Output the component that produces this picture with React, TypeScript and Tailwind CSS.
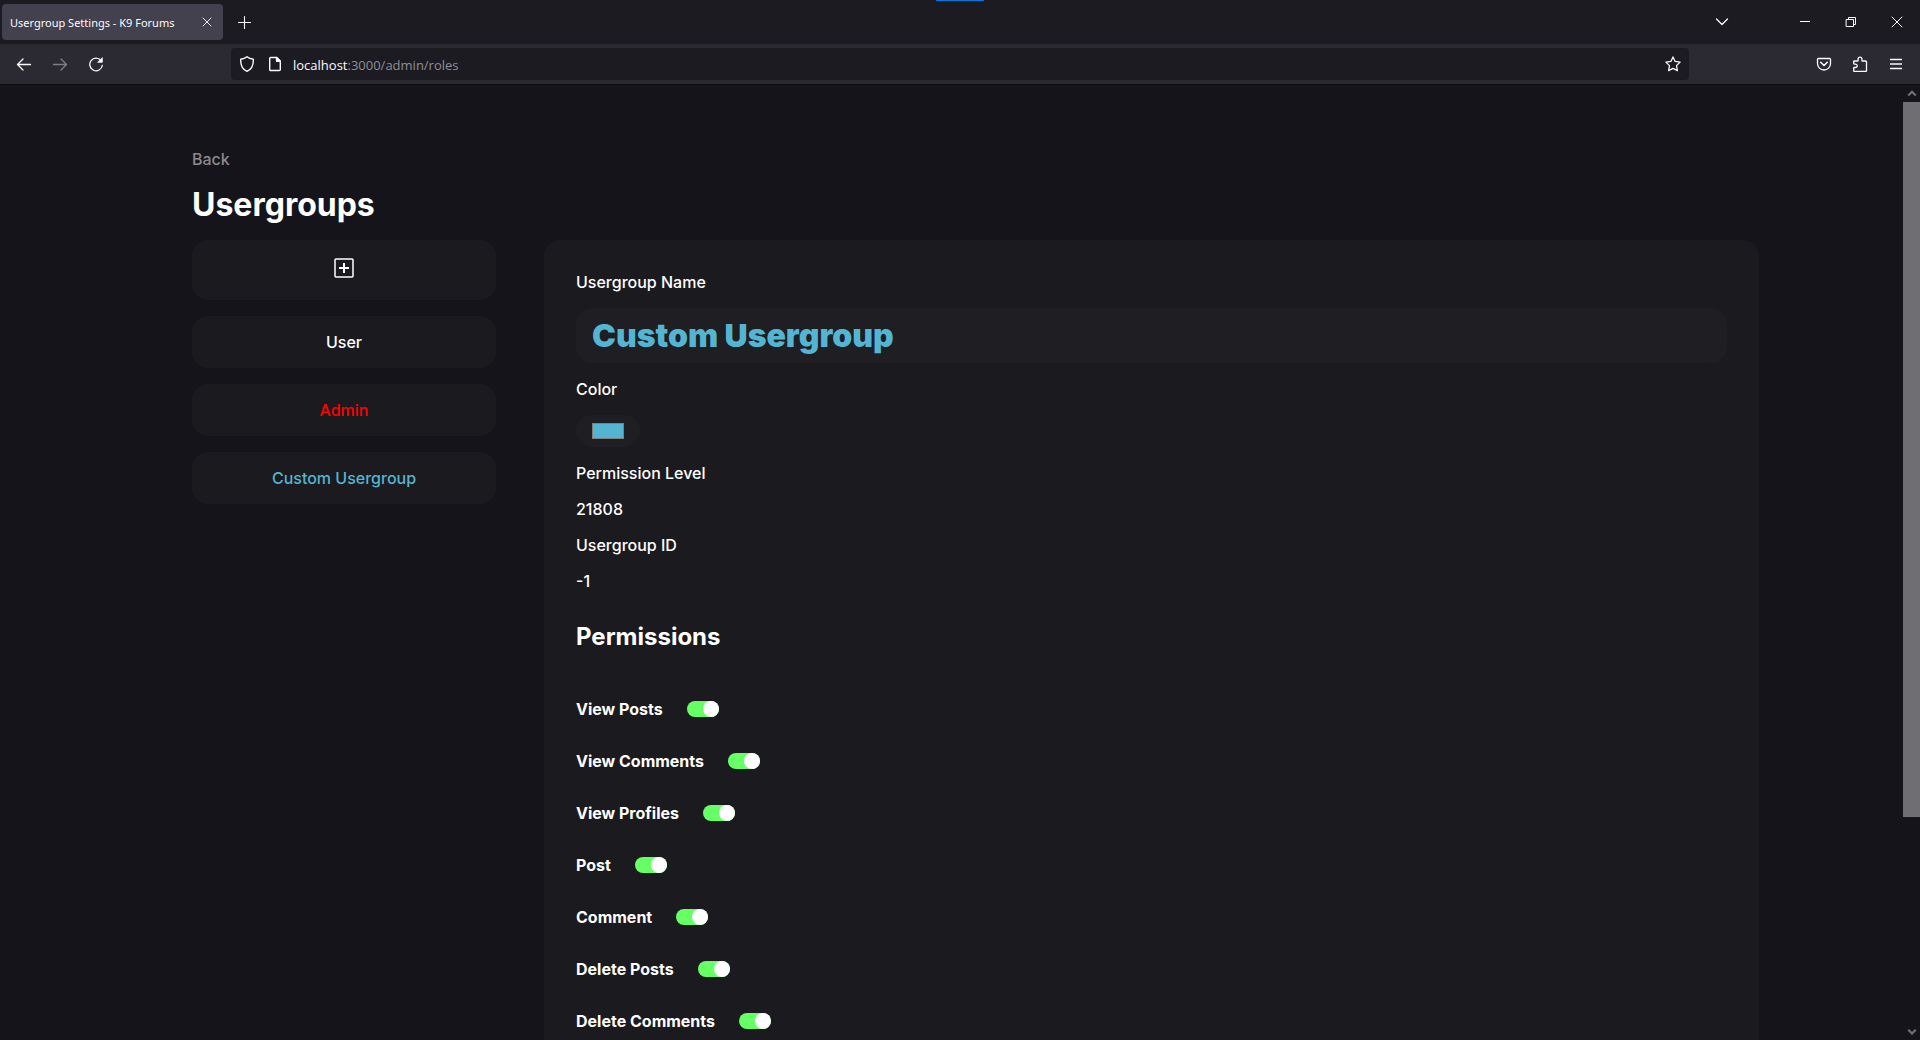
import { useState } from "react";
import type { ReactNode } from "react";

function Icon({ children, className = "size-4" }: { children: ReactNode; className?: string }) {
  return (
    <svg
      viewBox="0 0 16 16"
      fill="none"
      stroke="currentColor"
      strokeWidth="1.3"
      strokeLinecap="round"
      strokeLinejoin="round"
      aria-hidden="true"
      className={className}
    >
      {children}
    </svg>
  );
}

function BarButton({
  label,
  children,
  className = "",
  disabled = false,
}: {
  label: string;
  children: ReactNode;
  className?: string;
  disabled?: boolean;
}) {
  return (
    <button
      type="button"
      aria-label={label}
      disabled={disabled}
      className={`flex size-8 shrink-0 items-center justify-center rounded disabled:opacity-40 ${className}`}
    >
      {children}
    </button>
  );
}

function TabStrip() {
  return (
    <div className="relative flex h-11 shrink-0 items-center bg-[#1c1b22] pl-0.5">
      <div className="absolute top-0 left-1/2 h-px w-12 -translate-x-1/2 bg-[#0078d7]" />
      <div className="flex h-9 w-[221px] items-center justify-between rounded bg-[#42414d] pr-1 pl-2">
        <span className="pt-0.5 font-['Noto_Sans',sans-serif] text-[11px] whitespace-nowrap">
          Usergroup Settings - K9 Forums
        </span>
        <button type="button" aria-label="Close tab" className="flex size-6 items-center justify-center">
          <Icon>
            <path d="M4 4l8 8M12 4l-8 8" strokeWidth="0.900" />
          </Icon>
        </button>
      </div>
      <BarButton label="New tab" className="ml-1.5">
        <Icon>
          <path d="M7.500 2.500v12M1.500 8.500h12" strokeWidth="1.100" />
        </Icon>
      </BarButton>
      <div className="ml-auto flex items-center">
        <BarButton label="List all tabs" className="mr-11">
          <Icon>
            <path d="M2.500 5l5.500 5.500L13.500 5" />
          </Icon>
        </BarButton>
        <BarButton label="Minimize" className="w-[46px]">
          <Icon>
            <path d="M3 7.500h10" strokeWidth="1" strokeLinecap="butt" />
          </Icon>
        </BarButton>
        <BarButton label="Restore" className="w-[46px]">
          <Icon>
            <path d="M3.500 5.500h7v7h-7zM5.500 5.500v-2h7v7h-2" strokeWidth="1" strokeLinejoin="miter" />
          </Icon>
        </BarButton>
        <BarButton label="Close" className="w-[46px]">
          <Icon>
            <path d="M3 3l10 10M13 3L3 13" strokeWidth="1" />
          </Icon>
        </BarButton>
      </div>
    </div>
  );
}

function Toolbar() {
  return (
    <div className="flex h-[41px] shrink-0 items-center border-b border-[#0c0c0d] bg-[#2b2a33]">
      <div className="flex w-[231px] shrink-0 gap-1 pl-2">
        <BarButton label="Back">
          <Icon>
            <path d="M1.500 8.500h13M7 3L1.500 8.500 7 14" />
          </Icon>
        </BarButton>
        <BarButton label="Forward" disabled>
          <Icon>
            <path d="M1.500 8.500h13M9 3l5.500 5.500L9 14" />
          </Icon>
        </BarButton>
        <BarButton label="Reload">
          <Icon>
            <path d="M13 4.500A6.300 6.300 0 1 0 14.300 9.500" />
            <path d="M14.300 2v4.300H10z" fill="currentColor" strokeWidth="0.800" />
          </Icon>
        </BarButton>
      </div>
      <div className="flex h-8 min-w-0 flex-1 items-center rounded bg-[#1c1b22] px-2">
        <Icon className="size-4 shrink-0">
          <path
            d="M8 0.700c1.700 1.400 3.700 2.200 6.300 2.600 0.300 5.600-1.600 10-6.300 12-4.700-2-6.600-6.400-6.300-12C4.300 2.900 6.300 2.100 8 0.700z"
            strokeWidth="1.400"
          />
        </Icon>
        <Icon className="ml-3 size-4 shrink-0">
          <path d="M3.700 1.500h6l3.600 3.600v8.400a1 1 0 0 1-1 1H3.700a1 1 0 0 1-1-1v-11a1 1 0 0 1 1-1z" strokeWidth="1.400" />
          <path d="M9.500 1.500v3.800h3.800z" fill="currentColor" />
        </Icon>
        <div className="ml-2.5 flex min-w-0 flex-1 items-center pt-0.5 text-[13px] leading-5">
          <label htmlFor="address">localhost</label>
          <input
            id="address"
            defaultValue=":3000/admin/roles"
            className="min-w-0 flex-1 bg-transparent text-[#8f8f97] outline-none"
          />
        </div>
        <button type="button" aria-label="Bookmark this page">
          <Icon>
            <path d="M8 0.900l2.100 4.500 5 0.700-3.600 3.500 0.900 5L8 12.300l-4.400 2.300 0.900-5L0.900 6.100l5-0.700z" />
          </Icon>
        </button>
      </div>
      <div className="flex w-[231px] shrink-0 justify-end gap-1 pr-2">
        <BarButton label="Save to Pocket">
          <Icon>
            <path d="M2.500 2.500h11a1 1 0 0 1 1 1V7.500a6.500 6.500 0 0 1-13 0V3.500a1 1 0 0 1 1-1z" />
            <path d="M4.700 6.300L8 9.500l3.300-3.200" strokeWidth="1.600" />
          </Icon>
        </BarButton>
        <BarButton label="Extensions">
          <Icon>
            <path d="M2 5h3.500a0.600 0.600 0 0 0 0.600-0.600V3a1.900 1.900 0 0 1 3.800 0v1.400a0.600 0.600 0 0 0 0.600 0.600H13.500a1 1 0 0 1 1 1v8.500a1 1 0 0 1-1 1H2.500a0.800 0.800 0 0 1-0.800-0.800V12a0.500 0.500 0 0 1 0.500-0.500H3.500a1.700 1.700 0 0 0 0-3.400H2.200a0.500 0.500 0 0 1-0.500-0.500V5.300z" />
          </Icon>
        </BarButton>
        <BarButton label="Open application menu">
          <Icon>
            <path d="M2.500 3.500h11M2.500 8h11M2.500 12.500h11" />
          </Icon>
        </BarButton>
      </div>
    </div>
  );
}

const groups = [
  { name: "User", color: "text-white" },
  { name: "Admin", color: "text-[#ff0000]" },
  { name: "Custom Usergroup", color: "text-[#54b5d2]" },
];

const permissions = [
  "View Posts",
  "View Comments",
  "View Profiles",
  "Post",
  "Comment",
  "Delete Posts",
  "Delete Comments",
];

function Toggle({ label }: { label: string }) {
  const [on, setOn] = useState(true);
  return (
    <label className="flex items-center gap-6 self-start leading-5 font-bold">
      {label}
      <input
        type="checkbox"
        checked={on}
        onChange={() => setOn(!on)}
        className="h-4 w-8 appearance-none rounded-full bg-[#3a3a40] before:block before:size-4 before:rounded-full before:bg-white checked:bg-[#66ff66] checked:before:ml-4"
      />
    </label>
  );
}

function Scrollbar() {
  return (
    <div aria-hidden="true" className="flex w-[17px] shrink-0 flex-col text-[#6f6e73]">
      <div className="flex h-[17px] items-center justify-center">
        <Icon className="size-3">
          <path d="M3 10l5-5 5 5" strokeWidth="3" strokeLinecap="butt" strokeLinejoin="miter" />
        </Icon>
      </div>
      <div className="flex-1">
        <div className="h-[77.6%] bg-[#6f6e73]" />
      </div>
      <div className="flex h-[17px] items-center justify-center">
        <Icon className="size-3">
          <path d="M3 5l5 5 5-5" strokeWidth="3" strokeLinecap="butt" strokeLinejoin="miter" />
        </Icon>
      </div>
    </div>
  );
}

export default function App() {
  return (
    <div className="flex h-screen flex-col overflow-hidden bg-[#15141a] text-white">
      <header className="font-['Open_Sans',sans-serif] text-[#fbfbfe]">
        <TabStrip />
        <Toolbar />
      </header>
      <div className="flex min-h-0 flex-1">
        <main className="min-w-0 flex-1 overflow-hidden pt-16 pr-36 pl-48 font-['Inter',sans-serif] text-base leading-5 font-medium">
          <a href="#admin" className="inline-block text-[#8a898c]">
            Back
          </a>
          <h1 className="mt-4 text-[32px] leading-10 font-bold">Usergroups</h1>
          <div className="mt-[15px] flex items-start gap-12">
            <nav aria-label="Usergroups" className="flex w-76 shrink-0 flex-col gap-4">
              <button
                type="button"
                aria-label="Add usergroup"
                className="flex h-15 justify-center rounded-2xl bg-[#1b1a1e] pt-4"
              >
                <svg viewBox="0 0 24 24" fill="none" stroke="currentColor" aria-hidden="true" className="size-6">
                  <rect x="3" y="3" width="18" height="18" rx="1" strokeWidth="1.500" />
                  <path d="M12 7v10M7 12h10" strokeWidth="2" />
                </svg>
              </button>
              {groups.map((group) => (
                <button
                  key={group.name}
                  type="button"
                  className={`rounded-2xl bg-[#1b1a1e] p-4 ${group.color}`}
                >
                  {group.name}
                </button>
              ))}
            </nav>
            <section className="flex min-w-0 flex-1 flex-col gap-4 rounded-2xl bg-[#1b1a1e] p-8">
              <label htmlFor="group-name">Usergroup Name</label>
              <input
                id="group-name"
                defaultValue="Custom Usergroup"
                className="h-[55px] w-full rounded-2xl bg-[#1f1e23] px-4 text-[32px] font-black text-[#54b5d2] outline-none"
              />
              <label htmlFor="group-color">Color</label>
              <input
                id="group-color"
                type="color"
                defaultValue="#54b5d2"
                className="h-8 w-16 appearance-none rounded-2xl bg-[#1f1e23] px-4 py-2 [&::-webkit-color-swatch]:rounded-none [&::-webkit-color-swatch]:border [&::-webkit-color-swatch]:border-[#808080] [&::-webkit-color-swatch-wrapper]:p-0"
              />
              <p>Permission Level</p>
              <p>21808</p>
              <p>Usergroup ID</p>
              <p>-1</p>
              <h2 className="mt-4 text-2xl leading-7 font-bold">Permissions</h2>
              <div className="mt-8 flex flex-col gap-8">
                {permissions.map((name) => (
                  <Toggle key={name} label={name} />
                ))}
              </div>
            </section>
          </div>
        </main>
        <Scrollbar />
      </div>
    </div>
  );
}
